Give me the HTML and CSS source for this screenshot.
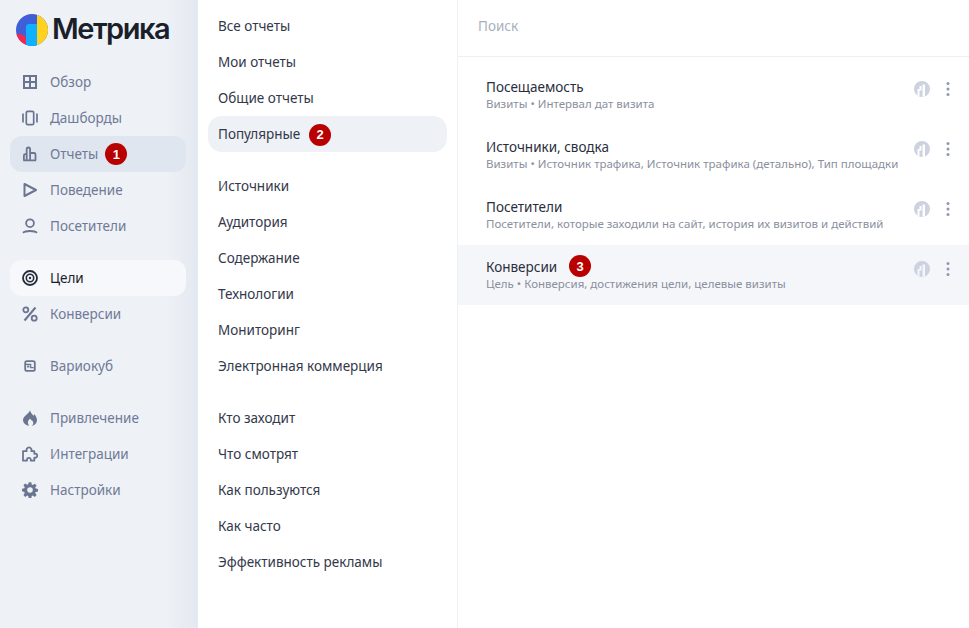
FILE: index.html
```html
<!DOCTYPE html>
<html lang="ru">
<head>
<meta charset="utf-8">
<title>Метрика</title>
<link rel="stylesheet" href="styles.css">
</head>
<body>
<div class="app">
  <aside class="sidebar">
    <div class="logo">
      <svg class="logo-mark" width="32" height="32" viewBox="0 0 32 32">
        <defs><clipPath id="lc"><circle cx="16" cy="16" r="16"/></clipPath></defs>
        <g clip-path="url(#lc)">
          <rect width="32" height="32" fill="#3f5fd8"/>
          <rect x="21" width="11" height="32" fill="#ffd21f"/>
          <path d="M0 20C4 20 10 20 10 26V32H6C2 30 0 25 0 20Z" fill="#f5274f"/>
          <path d="M10 22V13Q10 10 13 10H21V32H13Q10 32 10 29Z" fill="#0fb0ff"/>
        </g>
      </svg>
      <span class="logo-text">Метрика</span>
    </div>
    <nav class="nav">
      <div class="nav-group">
        <a class="nav-item"><svg class="ic" viewBox="0 0 16 16"><path fill="none" stroke="currentColor" stroke-width="2" d="M2 2h12v12H2zM8 2v12M2 8h12"/></svg><span>Обзор</span></a>
        <a class="nav-item"><svg class="ic" viewBox="0 0 16 16"><rect x="4.300" y="1.300" width="7.400" height="13.400" rx="1.500" fill="none" stroke="currentColor" stroke-width="1.700"/><path fill="none" stroke="currentColor" stroke-width="1.700" d="M1 3.500v9M15 3.500v9"/></svg><span>Дашборды</span></a>
        <a class="nav-item is-open"><svg class="ic" viewBox="0 0 16 16"><path fill="none" stroke="currentColor" stroke-width="1.800" d="M1.900 14V9.500a1.400 1.400 0 0 1 2.800 0V14M4.700 14V3.200a1.700 1.700 0 0 1 3.400 0V14M8.100 7h3.900a1.500 1.500 0 0 1 1.500 1.500V14M1.200 14.300h13"/></svg><span>Отчеты</span><b class="badge">1</b></a>
        <a class="nav-item"><svg class="ic" viewBox="0 0 16 16"><path fill="none" stroke="currentColor" stroke-width="2" stroke-linejoin="round" d="M2.500 2v12L14 8z"/></svg><span>Поведение</span></a>
        <a class="nav-item"><svg class="ic" viewBox="0 0 16 16"><circle cx="8" cy="5.200" r="3.900" fill="none" stroke="currentColor" stroke-width="1.800"/><path fill="none" stroke="currentColor" stroke-width="1.800" d="M1 14.800c1.500-1.600 4-1.800 7-1.800s5.500.2 7 1.800"/></svg><span>Посетители</span></a>
      </div>
      <div class="nav-group">
        <a class="nav-item is-active"><svg class="ic" viewBox="0 0 16 16"><circle cx="8" cy="8" r="7" fill="none" stroke="currentColor" stroke-width="1.800"/><circle cx="8" cy="8" r="3.700" fill="none" stroke="currentColor" stroke-width="1.600"/><circle cx="8" cy="8" r="1.200" fill="currentColor"/></svg><span>Цели</span></a>
        <a class="nav-item"><svg class="ic" viewBox="0 0 16 16"><circle cx="3.800" cy="3.800" r="2.500" fill="none" stroke="currentColor" stroke-width="1.800"/><circle cx="12.200" cy="12.200" r="2.500" fill="none" stroke="currentColor" stroke-width="1.800"/><path stroke="currentColor" stroke-width="2" d="M13.500 1.500l-11 13"/></svg><span>Конверсии</span></a>
      </div>
      <div class="nav-group">
        <a class="nav-item"><svg class="ic" viewBox="0 0 16 16"><rect x="3.200" y="3.200" width="9.600" height="9.600" rx="1.600" fill="none" stroke="currentColor" stroke-width="1.800"/><path fill="none" stroke="currentColor" stroke-width="1.200" d="M3.500 6.300h5.200v3.400h3"/><path fill="currentColor" d="M5.200 7.500h2.200v2H5.200z"/></svg><span>Вариокуб</span></a>
      </div>
      <div class="nav-group">
        <a class="nav-item"><svg class="ic" viewBox="0 0 16 16"><path fill="currentColor" d="M8 .2c.6 2.500 2 3.500 3.500 5.500.5-.5.800-1.200.8-1.800C13.800 6 15 7.800 15 10c0 3.600-3 5.600-5 5.800 1.500-1.200 1.800-3.400.4-5C9 10.200 8.500 9.400 8.300 8.500c-1.700 1.300-2.800 3-2.300 4.800.2.900.6 1.800 1 2.400C3.500 15.400 1 13 1 10 1 6 6.500 4.200 8 .2z"/></svg><span>Привлечение</span></a>
        <a class="nav-item"><svg class="ic" viewBox="0 0 16 16"><path fill="none" stroke="currentColor" stroke-width="1.800" stroke-linejoin="round" d="M1 14.700V5.200h3.700c-.8-2.200.7-3.900 2.300-3.900s3.100 1.700 2.300 3.900h3v2.600c2-.6 2.900.6 2.900 1.900s-1 2.500-2.900 1.900v3.100H8.800c.3-2.200-.8-2.800-1.900-2.800s-2.300.6-1.900 2.800z"/></svg><span>Интеграции</span></a>
        <a class="nav-item"><svg class="ic" viewBox="0 0 16 16"><path fill="currentColor" fill-rule="evenodd" d="M6.700.2h2.600l.4 2.400 1.100.5 2-1.400 1.800 1.800-1.400 2 .5 1.100 2.400.4v2.600l-2.400.4-.5 1.100 1.400 2-1.800 1.800-2-1.400-1.100.5-.4 2.400H6.700l-.4-2.400-1.100-.5-2 1.400-1.800-1.800 1.400-2-.5-1.100L0 9.300V6.700l2.300-.4.500-1.100-1.400-2 1.800-1.800 2 1.400 1.100-.5zM8 5.200a2.800 2.800 0 1 0 0 5.600 2.800 2.800 0 0 0 0-5.600z"/></svg><span>Настройки</span></a>
      </div>
    </nav>
  </aside>

  <section class="menu">
    <div class="menu-group">
      <a class="menu-item">Все отчеты</a>
      <a class="menu-item">Мои отчеты</a>
      <a class="menu-item">Общие отчеты</a>
      <a class="menu-item is-current">Популярные<b class="badge badge-menu">2</b></a>
    </div>
    <div class="menu-group">
      <a class="menu-item">Источники</a>
      <a class="menu-item">Аудитория</a>
      <a class="menu-item">Содержание</a>
      <a class="menu-item">Технологии</a>
      <a class="menu-item">Мониторинг</a>
      <a class="menu-item">Электронная коммерция</a>
    </div>
    <div class="menu-group">
      <a class="menu-item">Кто заходит</a>
      <a class="menu-item">Что смотрят</a>
      <a class="menu-item">Как пользуются</a>
      <a class="menu-item">Как часто</a>
      <a class="menu-item">Эффективность рекламы</a>
    </div>
  </section>

  <main class="content">
    <div class="search">Поиск</div>
    <div class="reports">
      <div class="report">
        <div class="report-text"><div class="report-title">Посещаемость</div><div class="report-sub">Визиты • Интервал дат визита</div></div>
        <svg class="pie" viewBox="0 0 16 16"><path fill="#cdd2e0" fill-rule="evenodd" d="M8 0a8 8 0 1 1 0 16A8 8 0 0 1 8 0zM7.500 5H5.500v3h-2v7l2 .8V9.500h2zM8.500 3.500V16h2.500V3.500z"/></svg>
        <svg class="more" viewBox="0 0 4 16"><circle cx="2" cy="2.500" r="1.500"/><circle cx="2" cy="8" r="1.500"/><circle cx="2" cy="13.500" r="1.500"/></svg>
      </div>
      <div class="report">
        <div class="report-text"><div class="report-title">Источники, сводка</div><div class="report-sub">Визиты • Источник трафика, Источник трафика (детально), Тип площадки</div></div>
        <svg class="pie" viewBox="0 0 16 16"><path fill="#cdd2e0" fill-rule="evenodd" d="M8 0a8 8 0 1 1 0 16A8 8 0 0 1 8 0zM7.500 5H5.500v3h-2v7l2 .8V9.500h2zM8.500 3.500V16h2.500V3.500z"/></svg>
        <svg class="more" viewBox="0 0 4 16"><circle cx="2" cy="2.500" r="1.500"/><circle cx="2" cy="8" r="1.500"/><circle cx="2" cy="13.500" r="1.500"/></svg>
      </div>
      <div class="report">
        <div class="report-text"><div class="report-title">Посетители</div><div class="report-sub">Посетители, которые заходили на сайт, история их визитов и действий</div></div>
        <svg class="pie" viewBox="0 0 16 16"><path fill="#cdd2e0" fill-rule="evenodd" d="M8 0a8 8 0 1 1 0 16A8 8 0 0 1 8 0zM7.500 5H5.500v3h-2v7l2 .8V9.500h2zM8.500 3.500V16h2.500V3.500z"/></svg>
        <svg class="more" viewBox="0 0 4 16"><circle cx="2" cy="2.500" r="1.500"/><circle cx="2" cy="8" r="1.500"/><circle cx="2" cy="13.500" r="1.500"/></svg>
      </div>
      <div class="report is-hover">
        <div class="report-text"><div class="report-title">Конверсии<b class="badge badge-report">3</b></div><div class="report-sub">Цель • Конверсия, достижения цели, целевые визиты</div></div>
        <svg class="pie" viewBox="0 0 16 16"><path fill="#cdd2e0" fill-rule="evenodd" d="M8 0a8 8 0 1 1 0 16A8 8 0 0 1 8 0zM7.500 5H5.500v3h-2v7l2 .8V9.500h2zM8.500 3.500V16h2.500V3.500z"/></svg>
        <svg class="more" viewBox="0 0 4 16"><circle cx="2" cy="2.500" r="1.500"/><circle cx="2" cy="8" r="1.500"/><circle cx="2" cy="13.500" r="1.500"/></svg>
      </div>
    </div>
  </main>
</div>
</body>
</html>
```

FILE: styles.css
```css
* { box-sizing: border-box; }
html, body { margin: 0; height: 100%; }
body {
  font-family: "Noto Sans", "Open Sans", "Liberation Sans", sans-serif;
  font-size: 13.5px;
  color: #22242e;
  background: #fff;
  overflow: hidden;
}
.app { display: flex; height: 628px; }

.sidebar {
  width: 198px;
  flex: none;
  padding: 0 12px 0 10px;
  background: linear-gradient(to right, #eef1f6 0, #eef1f6 165px, #e4e8f0 198px);
}
.logo { display: flex; align-items: center; height: 64px; padding: 0 0 4px 6px; gap: 4px; }
.logo-mark { flex: none; }
.logo-text { font-family: "Inter", sans-serif; font-size: 29px; line-height: 32px; font-weight: 600; letter-spacing: -1.500px; color: #1b1e2b; margin-top: -2px; }

.nav { display: flex; flex-direction: column; gap: 16px; }
.nav-item {
  display: flex;
  align-items: center;
  height: 36px;
  padding-left: 12px;
  border-radius: 12px;
  color: #6f7a96;
}
.nav-item .ic { width: 16px; height: 16px; margin-right: 12px; flex: none; color: #6b7590; }
.nav-item.is-open { background: #e0e6f0; }
.nav-item.is-active { background: #f6f8fb; color: #1b1e2b; }
.nav-item.is-active .ic { color: #262a3a; }

.badge {
  display: inline-flex;
  align-items: center;
  justify-content: center;
  width: 22px;
  height: 22px;
  margin-left: 7px;
  border-radius: 50%;
  background: #b80000;
  color: #fff;
  font: 700 13px "Liberation Sans", sans-serif;
}
.badge-menu { margin-left: 9px; margin-top: 1px; }
.badge-report { margin-left: 12px; margin-top: -2px; }

.menu {
  width: 260px;
  flex: none;
  padding: 8px 10px;
  border-right: 1px solid #eef0f4;
  display: flex;
  flex-direction: column;
  gap: 16px;
}
.menu-item {
  display: flex;
  align-items: center;
  height: 36px;
  padding-left: 10px;
  border-radius: 14px;
  color: #33384a;
}
.menu-item.is-current { background: #eef1f6; }

.content { flex: 1; min-width: 0; }
.search {
  height: 57px;
  padding: 0 0 4px 20px;
  display: flex;
  align-items: center;
  border-bottom: 1px solid #eef0f4;
  color: #a9afbd;
}
.reports { padding-top: 8px; }
.report {
  display: flex;
  align-items: center;
  height: 60px;
  padding: 0 19px 0 28px;
}
.report.is-hover { background: #f5f6fa; }
.report-text { flex: 1; min-width: 0; }
.report-title { display: flex; align-items: center; height: 20px; margin-top: -2px; color: #2a2e3c; }
.report-sub { font-size: 11.5px; line-height: 14px; color: #8a8f9e; white-space: nowrap; }
.pie { width: 16px; height: 16px; flex: none; margin-right: 16px; margin-top: -12px; }
.more { width: 4px; height: 16px; flex: none; fill: #8f97b2; margin-top: -12px; }
```
